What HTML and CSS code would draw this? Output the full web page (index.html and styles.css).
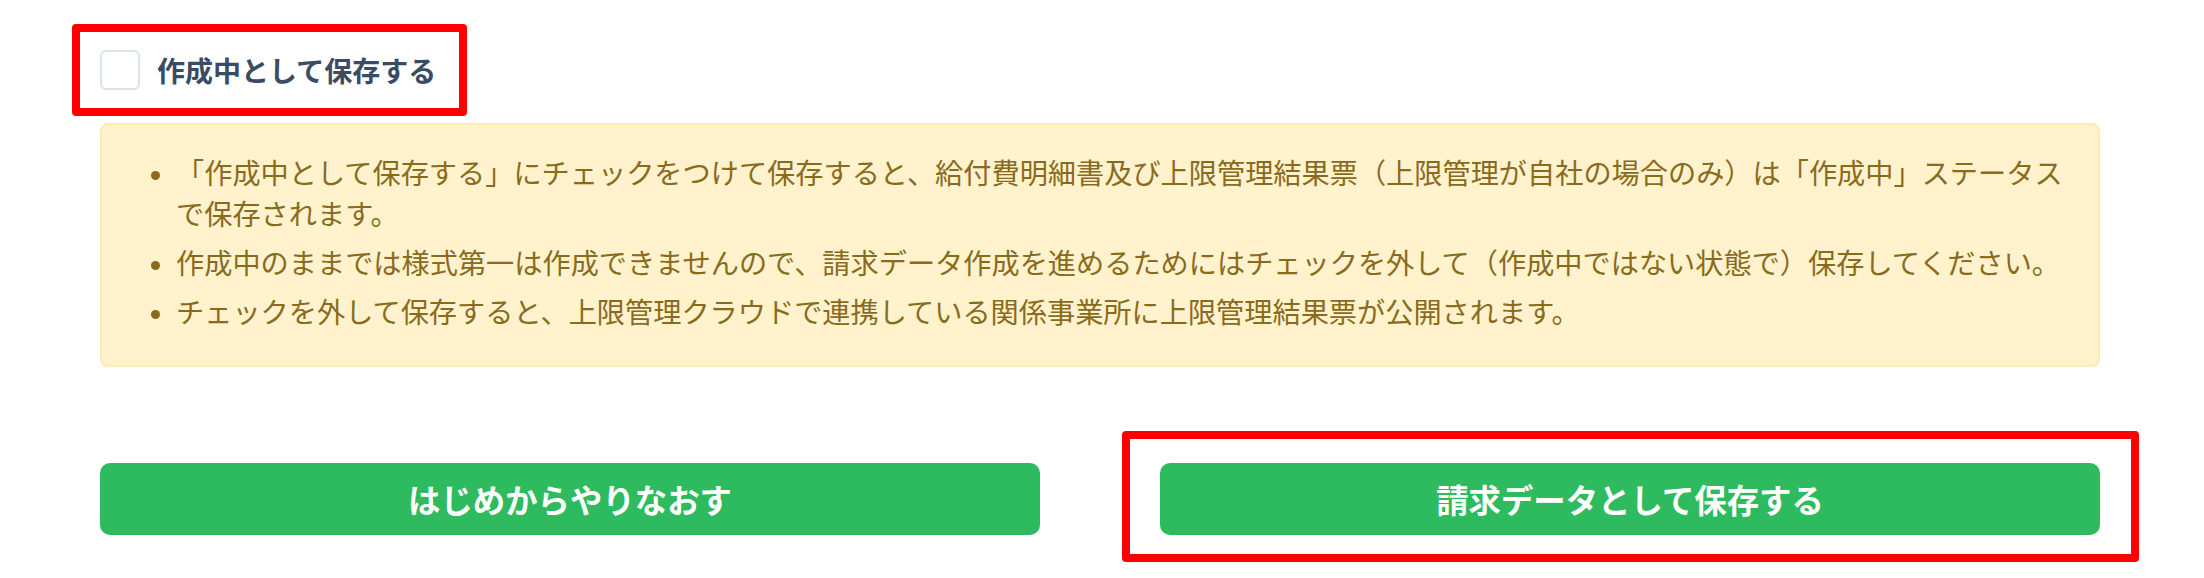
FILE: index.html
```html
<!DOCTYPE html>
<html lang="ja">
<head>
<meta charset="utf-8">
<title>保存</title>
<link rel="stylesheet" href="styles.css">
</head>
<body>
<div class="page">
  <div class="check-row">
    <label class="check">
      <input type="checkbox" class="check-box">
      <span class="check-label">作成中として保存する</span>
    </label>
    <span class="mark mark-check"></span>
  </div>

  <div class="notice">
    <ul class="notice-list">
      <li>「作成中として保存する」にチェックをつけて保存すると、給付費明細書及び上限管理結果票（上限管理が自社の場合のみ）は「作成中」ステータス<br>で保存されます。</li>
      <li>作成中のままでは様式第一は作成できませんので、請求データ作成を進めるためにはチェックを外して（作成中ではない状態で）保存してください。</li>
      <li>チェックを外して保存すると、上限管理クラウドで連携している関係事業所に上限管理結果票が公開されます。</li>
    </ul>
  </div>

  <div class="actions">
    <div class="action">
      <button class="btn">はじめからやりなおす</button>
    </div>
    <div class="action">
      <button class="btn">請求データとして保存する</button>
      <span class="mark mark-btn"></span>
    </div>
  </div>
</div>
</body>
</html>
```

FILE: styles.css
```css
* { box-sizing: border-box; }

html, body {
  margin: 0;
  padding: 0;
  background: #ffffff;
}

body {
  font-family: "Noto Sans CJK JP", "Noto Sans", sans-serif;
  color: #3c4b64;
}

.page {
  width: 2204px;
  min-height: 578px;
  padding: 50px 104px 43px 100px;
}

.check-row {
  position: relative;
  height: 40px;
}

.check {
  display: flex;
  align-items: center;
  gap: 17px;
  height: 40px;
}

.check-box {
  appearance: none;
  -webkit-appearance: none;
  margin: 0;
  width: 40px;
  height: 40px;
  border: 2px solid #dbe6e3;
  border-radius: 6px;
  background: #ffffff;
  flex: none;
}

.check-label {
  font-family: "Noto Sans CJK JP", "Noto Sans", sans-serif;
  font-size: 28px;
  font-weight: 700;
  color: #3c4b64;
  line-height: 40px;
  white-space: nowrap;
}

.mark {
  position: absolute;
  border: 8px solid #ff0000;
  border-radius: 4px;
  pointer-events: none;
}

.mark-check {
  left: -28px;
  top: -26px;
  width: 395px;
  height: 92px;
}

.notice {
  margin-top: 33px;
  background: #fff2cc;
  border: 2px solid #fdeab4;
  border-radius: 8px;
  padding: 26px 8px 34px 34px;
  color: #8a6a1c;
}

.notice-list {
  margin: 0;
  padding-left: 40px;
  font-size: 28.2px;
  line-height: 41px;
}

.notice-list li {
  margin-bottom: 8px;
}

.notice-list li:last-child {
  margin-bottom: 0;
}

.notice-list li::marker {
  font-size: 24px;
}

.actions {
  margin-top: 96px;
  display: grid;
  grid-template-columns: 940px 940px;
  column-gap: 120px;
}

.action {
  position: relative;
}

.btn {
  display: block;
  width: 100%;
  height: 72px;
  border: none;
  border-radius: 10px;
  background: #2eba5e;
  color: #ffffff;
  font-family: "Noto Sans CJK JP", "Noto Sans", sans-serif;
  font-size: 32.4px;
  font-weight: 700;
  line-height: 72px;
  padding: 0;
}

.mark-btn {
  left: -38px;
  top: -32px;
  right: -39px;
  bottom: -27px;
}
```
